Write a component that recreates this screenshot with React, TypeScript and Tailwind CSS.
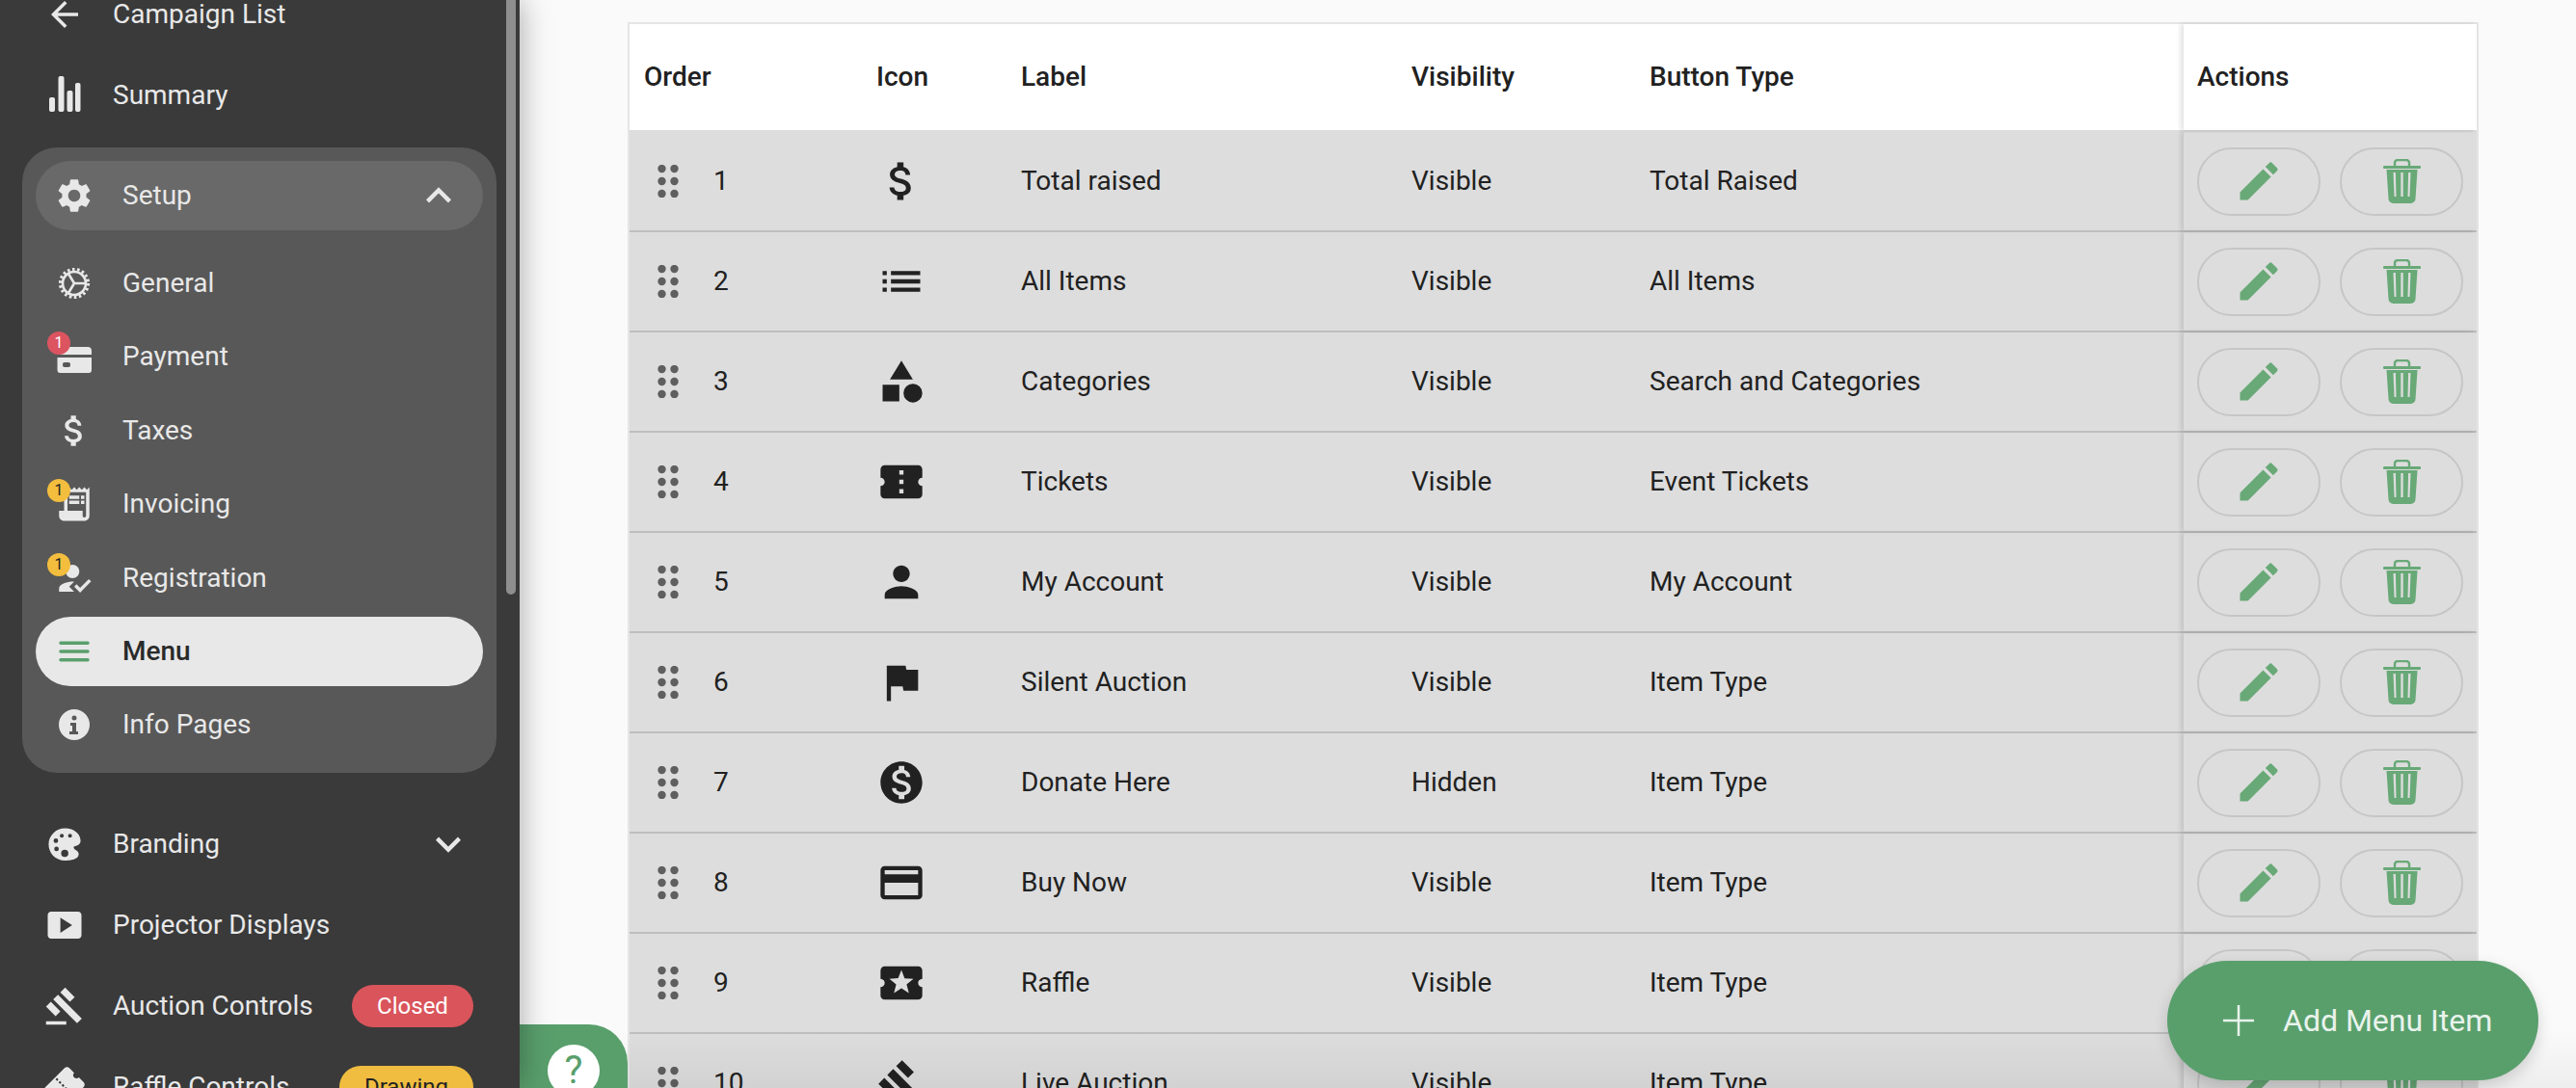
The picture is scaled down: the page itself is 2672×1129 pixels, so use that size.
import React from "react";

const paths = {
  arrowBack: "M20 11H7.83l5.59-5.59L12 4l-8 8 8 8 1.41-1.41L7.83 13H20v-2z",
  settings: "M19.14 12.94c.04-.3.06-.61.06-.94 0-.32-.02-.64-.07-.94l2.03-1.58c.18-.14.23-.41.12-.61l-1.92-3.32c-.12-.22-.37-.29-.59-.22l-2.39.96c-.5-.38-1.03-.7-1.62-.94l-.36-2.54c-.04-.24-.24-.41-.48-.41h-3.84c-.24 0-.43.17-.47.41l-.36 2.54c-.59.24-1.13.57-1.62.94l-2.39-.96c-.22-.08-.47 0-.59.22L2.74 8.87c-.12.21-.08.47.12.61l2.03 1.58c-.05.3-.09.63-.09.94s.02.64.07.94l-2.03 1.58c-.18.14-.23.41-.12.61l1.92 3.32c.12.22.37.29.59.22l2.39-.96c.5.38 1.03.7 1.62.94l.36 2.54c.05.24.24.41.48.41h3.84c.24 0 .44-.17.47-.41l.36-2.54c.59-.24 1.13-.56 1.62-.94l2.39.96c.22.08.47 0 .59-.22l1.92-3.32c.12-.22.07-.47-.12-.61l-2.01-1.58zM12 15.6c-1.98 0-3.6-1.62-3.6-3.6s1.62-3.6 3.6-3.6 3.6 1.62 3.6 3.6-1.62 3.6-3.6 3.6z",
  money: "M11.8 10.9c-2.27-.59-3-1.2-3-2.15 0-1.09 1.01-1.85 2.7-1.85 1.78 0 2.44.85 2.5 2.1h2.21c-.07-1.72-1.12-3.3-3.21-3.81V3h-3v2.16c-1.94.42-3.5 1.68-3.5 3.61 0 2.31 1.91 3.46 4.7 4.13 2.5.6 3 1.48 3 2.41 0 .69-.49 1.79-2.7 1.79-2.06 0-2.87-.92-2.98-2.1h-2.2c.12 2.19 1.76 3.42 3.68 3.83V21h3v-2.15c1.95-.37 3.5-1.5 3.5-3.55 0-2.84-2.43-3.81-4.7-4.4z",
  receipt: "M19.5 3.5 18 2l-1.5 1.5L15 2l-1.5 1.5L12 2l-1.5 1.5L9 2 7.5 3.5 6 2v14H3v3c0 1.66 1.34 3 3 3h12c1.66 0 3-1.34 3-3V2l-1.5 1.5zM19 19c0 .55-.45 1-1 1s-1-.45-1-1v-3H8V5h11v14zM9 7h6v2H9zm7 0h2v2h-2zm-7 3h6v2H9zm7 0h2v2h-2z",
  howToReg: "m9 17 3-2.94c-.39-.04-.68-.06-1-.06-2.67 0-8 1.34-8 4v2h9l-3-3zm2-5c2.21 0 4-1.79 4-4s-1.79-4-4-4-4 1.79-4 4 1.79 4 4 4zM15.47 20.5 12 17l1.4-1.41 2.07 2.08 5.13-5.17 1.4 1.41z",
  smartDisplay: "M20 4H4c-1.1 0-2 .9-2 2v12c0 1.1.9 2 2 2h16c1.1 0 2-.9 2-2V6c0-1.1-.9-2-2-2zM9.5 16.5v-9l7 4.5-7 4.5z",
  gavel: "M1 21h12v2H1zM5.245 8.07l2.83-2.827 14.14 14.142-2.828 2.828zM12.317 1l5.657 5.656-2.83 2.83-5.654-5.66zM3.825 9.485l5.657 5.657-2.828 2.828-5.657-5.657z",
  up: "m12 8-6 6 1.41 1.41L12 10.83l4.59 4.58L18 14z",
  down: "M16.59 8.59 12 13.17 7.41 8.59 6 10l6 6 6-6z",
  list: "M3 13h2v-2H3v2zm0 4h2v-2H3v2zm0-8h2V7H3v2zm4 4h14v-2H7v2zm0 4h14v-2H7v2zM7 7v2h14V7H7z",
  category: "m12 2-5.5 9h11zM3 13.5h8v8H3zM17.5 13a4.5 4.5 0 1 0 0 9 4.5 4.5 0 0 0 0-9z",
  ticket: "M22 10V6c0-1.11-.9-2-2-2H4c-1.1 0-1.99.89-1.99 2v4c1.1 0 1.99.9 1.99 2s-.89 2-2 2v4c0 1.1.9 2 2 2h16c1.1 0 2-.9 2-2v-4c-1.1 0-2-.9-2-2s.9-2 2-2zm-9 7.5h-2v-2h2v2zm0-4.5h-2v-2h2v2zm0-4.5h-2v-2h2v2z",
  person: "M12 12c2.21 0 4-1.79 4-4s-1.79-4-4-4-4 1.79-4 4 1.79 4 4 4zm0 2c-2.67 0-8 1.34-8 4v2h16v-2c0-2.66-5.33-4-8-4z",
  flag: "M14.4 6 14 4H5v17h2v-7h5.6l.4 2h7V6z",
  monetization: "M12 2C6.48 2 2 6.48 2 12s4.48 10 10 10 10-4.48 10-10S17.52 2 12 2zm1.41 16.09V20h-2.67v-1.93c-1.71-.36-3.16-1.46-3.27-3.4h1.96c.1 1.05.82 1.87 2.65 1.87 1.96 0 2.4-.98 2.4-1.59 0-.83-.44-1.61-2.67-2.14-2.48-.6-4.18-1.62-4.18-3.67 0-1.72 1.39-2.84 3.11-3.21V4h2.67v1.95c1.86.45 2.79 1.86 2.85 3.39H14.3c-.05-1.11-.64-1.87-2.22-1.87-1.5 0-2.4.68-2.4 1.64 0 .84.65 1.39 2.67 1.91s4.18 1.39 4.18 3.91c-.01 1.83-1.38 2.83-3.12 3.16z",
  card: "M20 4H4c-1.11 0-1.99.89-1.99 2L2 18c0 1.11.89 2 2 2h16c1.11 0 2-.89 2-2V6c0-1.11-.89-2-2-2zm0 14H4v-6h16v6zm0-10H4V6h16v2z",
  activity: "M20 12c0-1.1.9-2 2-2V6c0-1.1-.9-2-2-2H4c-1.1 0-1.99.9-1.99 2v4c1.1 0 1.99.9 1.99 2s-.89 2-2 2v4c0 1.1.9 2 2 2h16c1.1 0 2-.9 2-2v-4c-1.1 0-2-.9-2-2zm-4.42 4.8L12 14.5l-3.58 2.3 1.08-4.12-3.29-2.69 4.24-.25L12 5.8l1.54 3.95 4.24.25-3.29 2.69 1.09 4.11z",
  edit: "M3 17.25V21h3.75L17.81 9.94l-3.75-3.75L3 17.25zM20.71 7.04c.39-.39.39-1.02 0-1.41l-2.34-2.34a.9959.9959 0 0 0-1.41 0l-1.83 1.83 3.75 3.75 1.83-1.83z",
};

const Icon = ({ d, size = 42 }: { d: string; size?: number }) => (
  <svg viewBox="0 0 24 24" width={size} height={size} fill="currentColor" className="shrink-0">
    <path d={d} />
  </svg>
);

const SummaryIcon = () => (
  <svg viewBox="0 0 42 42" width={42} height={42} fill="currentColor">
    <rect x="5" y="23" width="6" height="15" rx="2" />
    <rect x="14.5" y="1" width="6" height="37" rx="2" />
    <rect x="23.5" y="16" width="6" height="22" rx="2" />
    <rect x="32" y="8" width="5.5" height="30" rx="2" />
  </svg>
);

const GeneralIcon = () => (
  <svg viewBox="0 0 42 42" width={42} height={42} fill="none" stroke="currentColor">
    <circle cx="21" cy="21" r="12" strokeWidth="2.6" />
    <circle cx="21" cy="21" r="14.6" strokeWidth="3" strokeDasharray="2.6 2.5" />
    <path d="M21 21h12M21 21l-6-10M21 21l-6 10" strokeWidth="2.6" />
  </svg>
);

const PaymentIcon = () => (
  <svg viewBox="0 0 42 42" width={42} height={42} fill="currentColor">
    <path d="M7 15a4 4 0 0 1 4-4h24a4 4 0 0 1 4 4v4H3v0h4zM3.5 22h35.5v13a3 3 0 0 1-3 3H6.500a3 3 0 0 1-3-3z" />
    <rect x="9" y="27" width="8" height="5" rx="2" fill="#585858" />
  </svg>
);

const MenuIcon = () => (
  <svg viewBox="0 0 24 24" width={42} height={42} fill="none" stroke="currentColor" strokeWidth="2" strokeLinecap="round">
    <path d="M4 7h16M4 12h16M4 17h16" />
  </svg>
);

const InfoIcon = () => (
  <svg viewBox="0 0 42 42" width={42} height={42} fill="currentColor">
    <path
      fillRule="evenodd"
      d="M21 5a16 16 0 1 0 0 32 16 16 0 0 0 0-32zM21 11.500a2.500 2.500 0 1 1 0 5 2.500 2.500 0 0 1 0-5zM17 19h6v9h2v3h-9v-3h3v-6h-2z"
    />
  </svg>
);

const PaletteIcon = () => (
  <svg viewBox="-13 -13 123 123" width={42} height={42} fill="currentColor">
    <path
      fillRule="evenodd"
      d="M50 0C78 0 97 18 97 38C97 50 85 53 78 55C74 57 76 62 82 66C92 71 94 80 88 88C78 97 62 98 50 98C20 98 0 75 0 49C0 22 22 0 50 0ZM34 23a6 6 0 1 0 12 0a6 6 0 1 0-12 0ZM59 23a6 6 0 1 0 12 0a6 6 0 1 0-12 0ZM15 38a7 7 0 1 0 14 0a7 7 0 1 0-14 0ZM17 63a7 7 0 1 0 14 0a7 7 0 1 0-14 0ZM38 76a11 11 0 1 0 22 0a11 11 0 1 0-22 0Z"
    />
  </svg>
);

const RaffleIcon = () => (
  <svg viewBox="0 0 24 24" width={42} height={42} className="rotate-[-45deg]">
    <path
      fill="currentColor"
      d="M22 10V6c0-1.11-.9-2-2-2H4c-1.1 0-1.99.89-1.99 2v4c1.1 0 1.99.9 1.99 2s-.89 2-2 2v4c0 1.100.9 2 2 2h16c1.100 0 2-.9 2-2v-4c-1.100 0-2-.9-2-2s.9-2 2-2z"
    />
    <path d="M12 5v14" stroke="#3a3a3a" strokeWidth="1.200" strokeDasharray="1.300 1.200" />
  </svg>
);

const GripIcon = () => (
  <svg viewBox="0 0 22 34" width={22} height={34} fill="#5f5f5f" className="shrink-0">
    {[4, 17, 30].map((cy) => (
      <g key={cy}>
        <circle cx="4.500" cy={cy} r="4.200" />
        <circle cx="17.500" cy={cy} r="4.200" />
      </g>
    ))}
  </svg>
);

const TrashIcon = () => (
  <svg viewBox="0 0 39 46" width={39} height={46} fill="currentColor">
    <rect x="0" y="7" width="39" height="3" rx="1" />
    <path d="M12 8V4a3 3 0 0 1 3-3h9a3 3 0 0 1 3 3v4" fill="none" stroke="currentColor" strokeWidth="2.400" />
    <path
      fillRule="evenodd"
      d="M3.500 11H35.500L33.500 41a5 5 0 0 1-5 5H10.500a5 5 0 0 1-5-5ZM10.500 14l1 25h2l-.6-25ZM18.300 14v25h2.400v-25ZM26.100 14l-.6 25h2l1-25Z"
    />
  </svg>
);

const Badge = ({ tone }: { tone: "red" | "yellow" }) => (
  <span
    className={
      tone === "red"
        ? "absolute left-[-7px] top-[-5px] flex h-[24px] w-[24px] items-center justify-center rounded-full bg-[#db5460] text-[16px] text-white"
        : "absolute left-[-7px] top-[-5px] flex h-[24px] w-[24px] items-center justify-center rounded-full bg-[#f3bd3e] text-[16px] text-[#222222]"
    }
  >
    1
  </span>
);

const TopItem = ({ icon, label, children }: { icon: React.ReactNode; label: string; children?: React.ReactNode }) => (
  <div className="flex h-[72px] shrink-0 items-center pl-[46px] pr-[48px]">
    <span className="flex h-[42px] w-[42px] shrink-0 items-center justify-center">{icon}</span>
    <span className="ml-[29px] whitespace-nowrap">{label}</span>
    {children}
  </div>
);

const SubItem = ({ icon, label, badge }: { icon: React.ReactNode; label: string; badge?: "red" | "yellow" }) => (
  <div className="flex h-[72px] items-center pl-[19px]">
    <span className="relative flex h-[42px] w-[42px] shrink-0 items-center justify-center">
      {icon}
      {badge && <Badge tone={badge} />}
    </span>
    <span className="ml-[29px]">{label}</span>
  </div>
);

const Sidebar = () => (
  <aside className="relative z-10 h-full w-[539px] shrink-0 overflow-hidden bg-[#3a3a3a] text-[28px] text-[#e8e8e8] shadow-[0_0_30px_rgba(0,0,0,0.35)]">
    <div className="absolute right-[4px] top-0 h-[617px] w-[10px] rounded-b-[5px] bg-[#8e8e8e]" />
    <nav className="mt-[-21px] flex flex-col gap-[12px]">
      <TopItem icon={<Icon d={paths.arrowBack} />} label="Campaign List" />
      <TopItem icon={<SummaryIcon />} label="Summary" />

      <div className="ml-[23px] mr-[24px] mt-[6px] flex flex-col rounded-[36px] bg-[#585858] px-[14px] pb-[14px] pt-[14px]">
        <div className="flex h-[72px] items-center rounded-full bg-[#696969] pl-[19px] pr-[20px]">
          <Icon d={paths.settings} />
          <span className="ml-[29px]">Setup</span>
          <span className="ml-auto">
            <Icon d={paths.up} size={52} />
          </span>
        </div>
        <div className="mt-[19px] flex flex-col gap-[4.4px]">
          <SubItem icon={<GeneralIcon />} label="General" />
          <SubItem icon={<PaymentIcon />} label="Payment" badge="red" />
          <SubItem icon={<Icon d={paths.money} />} label="Taxes" />
          <SubItem icon={<Icon d={paths.receipt} />} label="Invoicing" badge="yellow" />
          <SubItem icon={<Icon d={paths.howToReg} />} label="Registration" badge="yellow" />
          <div className="flex h-[72px] items-center rounded-full bg-[#e8e8e8] pl-[19px] font-medium text-[#2a2a2a]">
            <span className="text-[#599f6c]">
              <MenuIcon />
            </span>
            <span className="ml-[29px]">Menu</span>
          </div>
          <SubItem icon={<InfoIcon />} label="Info Pages" />
        </div>
      </div>

      <div className="mt-[26px]">
        <TopItem icon={<PaletteIcon />} label="Branding">
          <span className="ml-auto">
            <Icon d={paths.down} size={52} />
          </span>
        </TopItem>
      </div>
      <TopItem icon={<Icon d={paths.smartDisplay} />} label="Projector Displays" />
      <TopItem icon={<Icon d={paths.gavel} />} label="Auction Controls">
        <span className="ml-auto flex h-[44px] w-[126px] items-center justify-center rounded-full bg-[#d9545b] text-[24px] text-white">
          Closed
        </span>
      </TopItem>
      <TopItem icon={<RaffleIcon />} label="Raffle Controls">
        <span className="ml-auto flex h-[44px] w-[139px] items-center justify-center rounded-full bg-[#f0bd40] text-[24px] text-[#222222]">
          Drawing
        </span>
      </TopItem>
    </nav>
  </aside>
);

const rows = [
  { order: 1, icon: paths.money, label: "Total raised", visibility: "Visible", type: "Total Raised" },
  { order: 2, icon: paths.list, label: "All Items", visibility: "Visible", type: "All Items" },
  { order: 3, icon: paths.category, label: "Categories", visibility: "Visible", type: "Search and Categories" },
  { order: 4, icon: paths.ticket, label: "Tickets", visibility: "Visible", type: "Event Tickets" },
  { order: 5, icon: paths.person, label: "My Account", visibility: "Visible", type: "My Account" },
  { order: 6, icon: paths.flag, label: "Silent Auction", visibility: "Visible", type: "Item Type" },
  { order: 7, icon: paths.monetization, label: "Donate Here", visibility: "Hidden", type: "Item Type" },
  { order: 8, icon: paths.card, label: "Buy Now", visibility: "Visible", type: "Item Type" },
  { order: 9, icon: paths.activity, label: "Raffle", visibility: "Visible", type: "Item Type" },
  { order: 10, icon: paths.gavel, label: "Live Auction", visibility: "Visible", type: "Item Type" },
];

const MenuTable = () => (
  <div className="w-[1920px] border-x-2 border-t-2 border-[#e5e5e5] text-[28px] text-[#212121]">
    <div className="grid h-[110px] grid-cols-[241px_150px_405px_247px_569px_304px] items-center bg-white font-medium">
      <div className="pl-[15px]">Order</div>
      <div className="pl-[15px]">Icon</div>
      <div className="pl-[15px]">Label</div>
      <div className="pl-[15px]">Visibility</div>
      <div className="pl-[15px]">Button Type</div>
      <div className="flex h-full items-center pl-[14px] shadow-[-3px_0_5px_rgba(0,0,0,0.12)]">Actions</div>
    </div>
    <div className="bg-[#dddddd] pt-[2px]">
      {rows.map((row) => (
        <div
          key={row.order}
          className="grid h-[104px] grid-cols-[241px_150px_405px_247px_569px_304px] items-center border-b-2 border-[#bebebe]"
        >
          <div className="flex items-center pl-[29px]">
            <GripIcon />
            <span className="ml-[36px]">{row.order}</span>
          </div>
          <div className="pl-[15px]">
            <Icon d={row.icon} size={52} />
          </div>
          <div className="pl-[15px]">{row.label}</div>
          <div className="pl-[15px]">{row.visibility}</div>
          <div className="pl-[15px]">{row.type}</div>
          <div className="flex h-full items-center gap-[20px] pl-[14px] text-[#68a977] shadow-[-3px_0_5px_rgba(0,0,0,0.12)]">
            <button className="flex h-[71px] w-[128px] items-center justify-center rounded-full border-2 border-[#c6c6c6]">
              <Icon d={paths.edit} size={52} />
            </button>
            <button className="flex h-[71px] w-[128px] items-center justify-center rounded-full border-2 border-[#c6c6c6]">
              <TrashIcon />
            </button>
          </div>
        </div>
      ))}
    </div>
  </div>
);

export default function App() {
  return (
    <div className="flex h-[1129px] w-[2672px] overflow-hidden bg-[#fafafa] font-['Roboto',sans-serif]">
      <Sidebar />
      <main className="relative h-full flex-1 overflow-hidden pl-[112px] pt-[23px]">
        <MenuTable />
        <div className="absolute bottom-0 left-0 right-0 h-[60px] bg-gradient-to-b from-transparent to-black/5" />
        <div className="absolute bottom-0 left-0 h-[66px] w-[112px] overflow-hidden rounded-tr-[40px] bg-[#599f6c]">
          <div className="ml-[29px] mt-[21px] flex h-[54px] w-[54px] items-start justify-center rounded-full bg-white pt-[4px] text-[40px] leading-[46px] text-[#599f6c]">
            ?
          </div>
        </div>
        <button className="absolute bottom-[8px] right-[39px] flex h-[124px] w-[385px] items-center rounded-full bg-[#599f6c] pl-[58px] text-[32px] text-[#e9f3ec] shadow-[0_6px_16px_rgba(0,0,0,0.16)]">
          <svg viewBox="0 0 32 32" width={32} height={32} stroke="currentColor" strokeWidth="2.500" className="shrink-0">
            <path d="M16 0v32M0 16h32" />
          </svg>
          <span className="ml-[30px] whitespace-nowrap">Add Menu Item</span>
        </button>
      </main>
    </div>
  );
}
